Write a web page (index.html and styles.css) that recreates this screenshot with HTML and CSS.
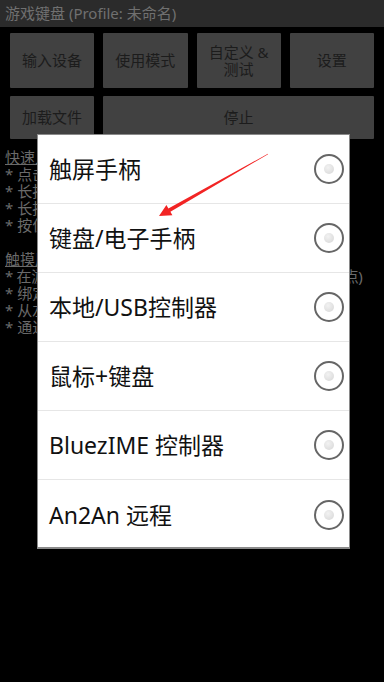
FILE: index.html
```html
<!DOCTYPE html>
<html lang="zh">
<head>
<meta charset="utf-8">
<link rel="stylesheet" href="styles.css">
</head>
<body>
<div class="screen">
  <div class="titlebar">游戏键盘 (Profile: 未命名)</div>
  <div class="buttons">
    <div class="row row1">
      <div class="btn">输入设备</div>
      <div class="btn">使用模式</div>
      <div class="btn">自定义 &amp;<br>测试</div>
      <div class="btn">设置</div>
    </div>
    <div class="row row2">
      <div class="btn">加载文件</div>
      <div class="btn wide">停止</div>
    </div>
  </div>
  <div class="help">
    <div class="head">快速入门</div>
    <div>* 点击上方按钮进行设置</div>
    <div>* 长按按钮查看帮助</div>
    <div>* 长按屏幕进入编辑</div>
    <div>* 按住并拖动按钮调整位置</div>
    <div class="gap"></div>
    <div class="head">触摸屏手柄</div>
    <div class="long">* 在游戏中长按屏幕显示方向键(可拖动并调整其定位点)</div>
    <div>* 绑定按键到屏幕</div>
    <div>* 从左侧滑动打开菜单</div>
    <div>* 通过设置调整透明度</div>
  </div>

  <div class="dialog">
    <div class="item"><span class="label">触屏手柄</span><span class="radio"></span></div>
    <div class="item"><span class="label">键盘/电子手柄</span><span class="radio"></span></div>
    <div class="item"><span class="label">本地/USB控制器</span><span class="radio"></span></div>
    <div class="item"><span class="label">鼠标+键盘</span><span class="radio"></span></div>
    <div class="item"><span class="label">BluezIME 控制器</span><span class="radio"></span></div>
    <div class="item last"><span class="label">An2An 远程</span><span class="radio"></span></div>
  </div>

  <svg class="arrow" width="384" height="682" viewBox="0 0 384 682">
    <polygon fill="#f22424" points="268.1,154.2 170.4,211.8 172.4,215.3 159,216 166.4,204.9 168.4,208.4 267.9,153.8"/>
  </svg>
</div>
</body>
</html>
```
FILE: styles.css
```css
* { box-sizing: border-box; }
html, body { margin: 0; padding: 0; background: #000; }
body {
  font-family: "Noto Sans", "Noto Sans CJK SC", sans-serif;
  width: 384px;
  height: 682px;
  overflow: hidden;
}
.screen { position: relative; width: 384px; height: 682px; background: #000; }
.titlebar {
  height: 27px;
  background: #2b2b2b;
  color: #707070;
  font-size: 15px;
  line-height: 27px;
  padding-left: 5px;
  white-space: nowrap;
}
.buttons { padding: 6px 10px 0 10px; display: flex; flex-direction: column; gap: 8px; }
.row { display: grid; gap: 9px; }
.row1 { grid-template-columns: repeat(4, 1fr); height: 55px; }
.row2 { grid-template-columns: 84px 1fr; height: 43px; }
.btn {
  background: #414141;
  color: #1c1c1c;
  font-size: 15px;
  line-height: 17px;
  display: flex;
  align-items: center;
  justify-content: center;
  text-align: center;
  border-radius: 1px;
}
.help {
  padding: 10px 0 0 5px;
  color: #6a6a6a;
  font-size: 15px;
  line-height: 17px;
  white-space: nowrap;
}
.help .head { text-decoration: underline; }
.help .gap { height: 17px; }
.help .long { letter-spacing: -0.32px; }
.dialog {
  position: absolute;
  left: 37px;
  top: 134px;
  width: 313px;
  height: 415px;
  background: #fff;
  border: 1px solid #8a8a8a;
  border-bottom-width: 2px;
  display: flex;
  flex-direction: column;
}
.item {
  height: 69px;
  border-bottom: 1px solid #e6e6e6;
  display: flex;
  align-items: center;
  justify-content: space-between;
  padding: 0 5px 0 11px;
  flex: none;
}
.item.last { border-bottom: none; }
.label { font-size: 23px; color: #111; white-space: nowrap; line-height: 30px; }
.radio {
  width: 30px; height: 30px;
  border: 2px solid #666;
  border-radius: 50%;
  display: flex; align-items: center; justify-content: center;
}
.radio::after {
  content: "";
  width: 10px; height: 10px; border-radius: 50%;
  background: radial-gradient(circle at 40% 35%, #f2f2f2, #d6d6d6);
}
.arrow { position: absolute; left: 0; top: 0; pointer-events: none; }
```
